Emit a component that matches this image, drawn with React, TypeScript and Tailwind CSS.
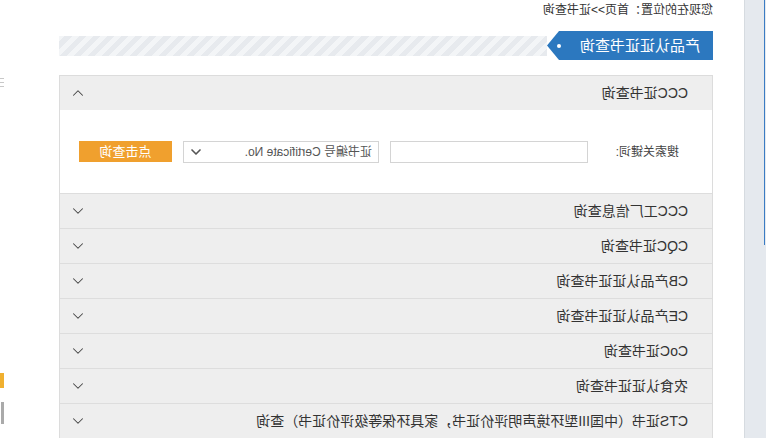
import { ChevronDown, ChevronUp } from 'lucide-react'

const rows = [
  'CCC工厂信息查询',
  'CQC证书查询',
  'CB产品认证证书查询',
  'CE产品认证证书查询',
  'CoC证书查询',
  '农食认证证书查询',
  'CTS证书（中国III型环境声明评价证书，家具环保等级评价证书）查询',
]

const App = () => {
  return (
    <div className="w-[766px] h-[438px] overflow-hidden bg-white -scale-x-100 font-['Liberation_Sans','Noto_Sans_CJK_SC',sans-serif] text-[#333]">
      <div className="flex h-full">
        {/* side strip */}
        <div className="w-[22px] h-full shrink-0 bg-[#e5e9ee] border-r border-[#d6dbe0] flex">
          <div className="ml-[1px] w-[1px] h-[245px] bg-[#3a7cc4]"></div>
        </div>

        {/* main */}
        <div className="ml-[31px] w-[654px] shrink-0">
          <p className="h-[20px] pt-[3px] text-[12px] leading-[15px]">您现在的位置：首页&gt;&gt;证书查询</p>

          {/* title */}
          <div className="mt-[11px] flex items-center h-[29px]">
            <div className="w-[166px] h-[29px] bg-[#2c78bf] flex items-center text-white [clip-path:polygon(0_0,calc(100%-12px)_0,100%_50%,calc(100%-12px)_100%,0_100%)]">
              <span className="ml-[13px] text-[15px] leading-none">产品认证证书查询</span>
              <span className="ml-[19px] w-[4px] h-[4px] rounded-full bg-white"></span>
            </div>
            <div className="flex-1 h-[20px] bg-[repeating-linear-gradient(45deg,#e7eaee_0px,#e7eaee_5px,#f3f5f7_5px,#f3f5f7_10px)]"></div>
          </div>

          {/* accordion */}
          <div className="mt-[15px] border-x border-t border-[#dcdcdc]">
            <div className="h-[34px] bg-[#eeeeee] flex items-center justify-between pl-[24px] pr-[9px] text-[14px]">
              <span>CCC证书查询</span>
              <ChevronUp size={18} strokeWidth={1.4} className="text-[#444]" />
            </div>
            <div className="h-[83px] bg-white flex items-center pl-[33px] text-[12px]">
              <span className="w-[91px] text-[#444]">搜索关键词:</span>
              <div className="w-[198px] h-[22px] border border-[#d4d4d4] bg-white"></div>
              <div className="ml-[11px] w-[196px] h-[22px] border border-[#d4d4d4] bg-white flex items-center justify-between pl-[6px] pr-[4px] text-[#555]">
                <span>证书编号 Certificate No.</span>
                <ChevronDown size={16} strokeWidth={2.5} className="text-[#555]" />
              </div>
              <button className="ml-[11px] w-[93px] h-[21px] bg-[#f0a02e] text-white text-[13px] leading-none">点击查询</button>
            </div>
            {rows.map((r) => (
              <div key={r} className="h-[35px] bg-[#eeeeee] border-t border-[#dddddd] flex items-center justify-between pl-[24px] pr-[9px] text-[14px]">
                <span>{r}</span>
                <ChevronDown size={18} strokeWidth={1.4} className="text-[#444]" />
              </div>
            ))}
          </div>
        </div>

        {/* right sidebar, cut off */}
        <div className="ml-[55px] w-[20px] shrink-0 flex flex-col">
          <div className="mt-[78px] w-[5px] flex flex-col gap-[3px]">
            <div className="h-[1px] bg-[#c8c8c8]"></div>
            <div className="h-[1px] bg-[#c8c8c8]"></div>
            <div className="h-[1px] bg-[#c8c8c8]"></div>
          </div>
          <div className="mt-[286px] w-[4px] h-[15px] bg-[#f0b030]"></div>
          <div className="mt-[14px] w-[3px] h-[22px] bg-[#aaaaaa]"></div>
        </div>
      </div>
    </div>
  )
}

export default App
